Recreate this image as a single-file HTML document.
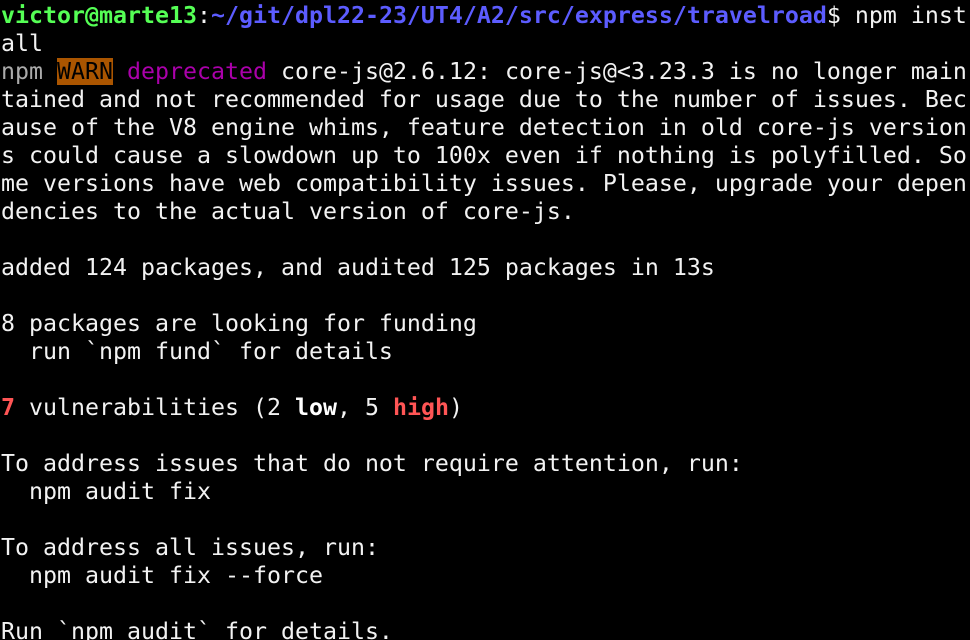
<!DOCTYPE html>
<html><head><style>
html,body{margin:0;background:#000;width:970px;height:640px;overflow:hidden}
pre{margin:0;padding:2px 0 0 1px;font-family:"DejaVu Sans Mono","Liberation Mono",monospace;font-size:23.25px;line-height:28px;color:#f2f2f2;white-space:pre}
.g{color:#55ff55;font-weight:bold}.b{color:#5c5cff;font-weight:bold}
.gr{color:#aaaaaa}.w{background:#aa5500;color:#000}.m{color:#aa00aa}
.r{color:#ff5555;font-weight:bold}.bo{font-weight:bold;color:#fff}
</style></head><body><pre><span class="g">victor@marte13</span>:<span class="b">~/git/dpl22-23/UT4/A2/src/express/travelroad</span>$ npm inst
all
<span class="gr">npm</span> <span class="w">WARN</span> <span class="m">deprecated</span> core-js@2.6.12: core-js@&lt;3.23.3 is no longer main
tained and not recommended for usage due to the number of issues. Bec
ause of the V8 engine whims, feature detection in old core-js version
s could cause a slowdown up to 100x even if nothing is polyfilled. So
me versions have web compatibility issues. Please, upgrade your depen
dencies to the actual version of core-js.

added 124 packages, and audited 125 packages in 13s

8 packages are looking for funding
  run `npm fund` for details

<span class="r">7</span> vulnerabilities (2 <span class="bo">low</span>, 5 <span class="r">high</span>)

To address issues that do not require attention, run:
  npm audit fix

To address all issues, run:
  npm audit fix --force

Run `npm audit` for details.</pre></body></html>
